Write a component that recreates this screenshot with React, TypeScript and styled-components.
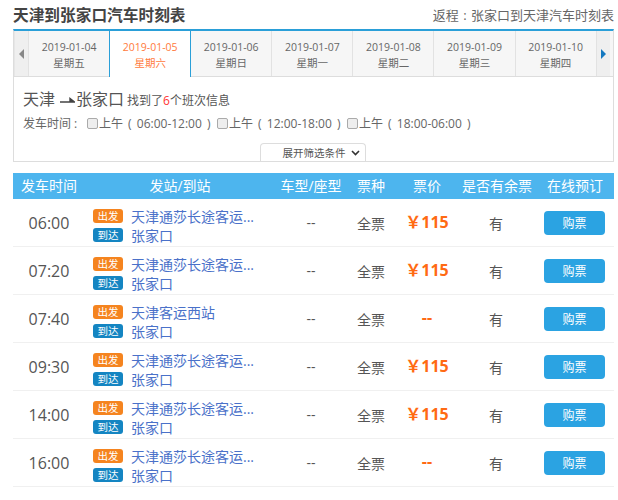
import styled, { createGlobalStyle } from "styled-components";

const GlobalStyle = createGlobalStyle`
  html, body {
    margin: 0;
    padding: 0;
    background: #fff;
    font-family: "Open Sans", "Noto Sans CJK SC", sans-serif;
    color: #555;
  }
`;

const Page = styled.div`
  width: 601px;
  margin-left: 13px;
`;

const TopBar = styled.div`
  height: 29px;
  display: flex;
  align-items: center;
  justify-content: space-between;
`;

const Title = styled.h1`
  margin: 0;
  font-size: 15.7px;
  font-weight: 700;
  color: #444;
`;

const ReturnLink = styled.a`
  font-size: 13px;
  word-spacing: 1px;
  color: #666;
`;

const Panel = styled.div`
  height: 130px;
  border: 1px solid #ddd;
  border-top: 2px solid #2a9fd8;
  position: relative;
`;

const DateBar = styled.div`
  display: flex;
  height: 45px;
  border-bottom: 1px solid #ddd;
  background: #f6f6f6;
`;

const Arrow = styled.div`
  width: 14px;
  display: flex;
  align-items: center;
  justify-content: center;
  background: #efefef;
  border-left: 1px solid #e6e6e6;
  box-sizing: border-box;
`;

const ArrowLeft = styled.span`
  border-style: solid;
  border-width: 5px 5px 5px 0;
  border-color: transparent #888 transparent transparent;
`;

const ArrowRight = styled.span`
  border-style: solid;
  border-width: 5px 0 5px 5px;
  border-color: transparent transparent transparent #1579c0;
`;

const DateTab = styled.div<{ $active?: boolean }>`
  width: 82.1px;
  flex-shrink: 0;
  box-sizing: border-box;
  height: ${(p) => (p.$active ? "46px" : "45px")};
  text-align: center;
  font-size: 10.5px;
  line-height: 16px;
  padding-top: 8px;
  color: ${(p) => (p.$active ? "#ff7a3c" : "#666")};
  background: ${(p) => (p.$active ? "#fff" : "transparent")};
  border-left: 1px solid ${(p) => (p.$active ? "#2a9fd8" : "#e2e2e2")};
  border-right: 1px solid ${(p) => (p.$active ? "#2a9fd8" : "#e2e2e2")};
  margin-right: -1px;
  position: relative;
  z-index: ${(p) => (p.$active ? 1 : 0)};
`;

const Body = styled.div`
  padding: 11px 9px 0;
`;

const RouteLine = styled.div`
  display: flex;
  align-items: baseline;
  color: #555;
  font-size: 16px;
  line-height: 22px;
`;

const RouteArrow = styled.svg`
  width: 15px;
  height: 8px;
  margin: 0 1px 0 5px;
`;

const Found = styled.span`
  font-size: 12px;
  margin-left: 3px;
`;

const Count = styled.span`
  color: #f33;
`;

const FilterLine = styled.div`
  display: flex;
  align-items: center;
  margin-top: 3px;
  font-size: 12px;
  line-height: 18px;
  color: #666;
`;

const FilterLabel = styled.span`
  width: 64px;
  white-space: pre;
`;

const TimeOption = styled.label`
  width: 130px;
  flex-shrink: 0;
  display: flex;
  align-items: center;
  white-space: pre;
  word-spacing: 2px;
`;

const Check = styled.span`
  width: 9px;
  height: 9px;
  margin: 0 1px 2px 0;
  border: 1px solid #aaa;
  border-radius: 2px;
  background: #eee;
`;

const ExpandTab = styled.div`
  position: absolute;
  left: 246px;
  bottom: 0;
  width: 106px;
  height: 18px;
  padding-left: 16px;
  box-sizing: border-box;
  border: 1px solid #ddd;
  border-bottom: none;
  border-radius: 4px 4px 0 0;
  background: #fff;
  display: flex;
  align-items: center;
  justify-content: center;
  gap: 5px;
  font-size: 10.5px;
  color: #555;
`;

const Table = styled.div`
  margin-top: 11px;
`;

const Grid = styled.div`
  display: grid;
  grid-template-columns: 72px 187px 78px 42px 70px 68px 84px;
  align-items: center;
`;

const HeaderRow = styled(Grid)`
  height: 26px;
  background: #4db5ee;
  color: #fff;
  font-size: 14px;
  line-height: 26px;
  text-align: center;
  white-space: nowrap;
`;

const StationHead = styled.div`
  padding-left: 3px;
`;

const BookHead = styled.div`
  padding-left: 6px;
`;

const Row = styled(Grid)`
  height: 47px;
  border-bottom: 1px solid #f0f0f0;
  text-align: center;
  font-size: 14px;
  color: #555;
`;

const Time = styled.div`
  font-size: 16px;
  color: #555;
`;

const Stations = styled.div`
  display: grid;
  grid-template-columns: 30px 1fr;
  column-gap: 8px;
  row-gap: 2px;
  align-items: center;
  padding: 6px 0 0 8px;
  text-align: left;
`;

const Badge = styled.span<{ $kind: "from" | "to" }>`
  height: 14px;
  line-height: 14px;
  border-radius: 3px;
  text-align: center;
  font-size: 10.5px;
  color: #fff;
  background: ${(p) => (p.$kind === "from" ? "#f5841f" : "#1485c2")};
`;

const StationName = styled.span`
  font-size: 14px;
  line-height: 17px;
  color: #4a71c9;
  white-space: nowrap;
`;

const Price = styled.div`
  padding-bottom: 3px;
  font-size: 16px;
  font-weight: 700;
  color: #ff6a13;
`;

const BuyButton = styled.button`
  justify-self: center;
  width: 61px;
  height: 24px;
  margin-left: 5px;
  padding: 0;
  border: none;
  border-radius: 4px;
  background: #2ba3e2;
  color: #fff;
  font-family: inherit;
  font-size: 12px;
`;

const dates = [
  ["2019-01-04", "星期五"],
  ["2019-01-05", "星期六"],
  ["2019-01-06", "星期日"],
  ["2019-01-07", "星期一"],
  ["2019-01-08", "星期二"],
  ["2019-01-09", "星期三"],
  ["2019-01-10", "星期四"],
];

const timeRanges = ["06:00-12:00", "12:00-18:00", "18:00-06:00"];

const LONG_NAME = "天津通莎长途客运...";

const trips = [
  { time: "06:00", from: LONG_NAME, price: "￥115" },
  { time: "07:20", from: LONG_NAME, price: "￥115" },
  { time: "07:40", from: "天津客运西站", price: "--" },
  { time: "09:30", from: LONG_NAME, price: "￥115" },
  { time: "14:00", from: LONG_NAME, price: "￥115" },
  { time: "16:00", from: LONG_NAME, price: "--" },
];

export default function App() {
  return (
    <Page>
      <GlobalStyle />
      <TopBar>
        <Title>天津到张家口汽车时刻表</Title>
        <ReturnLink>返程 : 张家口到天津汽车时刻表</ReturnLink>
      </TopBar>

      <Panel>
        <DateBar>
          <Arrow>
            <ArrowLeft />
          </Arrow>
          {dates.map(([date, week]) => (
            <DateTab key={date} $active={date === "2019-01-05"}>
              {date}
              <br />
              {week}
            </DateTab>
          ))}
          <Arrow>
            <ArrowRight />
          </Arrow>
        </DateBar>
        <Body>
          <RouteLine>
            天津
            <RouteArrow viewBox="0 0 15 8">
              <path d="M0 5h14.5L10 1.5V5" stroke="#444" strokeWidth="1.4" fill="#444" />
            </RouteArrow>
            张家口
            <Found>
              找到了<Count>6</Count>个班次信息
            </Found>
          </RouteLine>
          <FilterLine>
            <FilterLabel>发车时间 :</FilterLabel>
            {timeRanges.map((range) => (
              <TimeOption key={range}>
                <Check />上午 ( {range} )
              </TimeOption>
            ))}
          </FilterLine>
        </Body>
        <ExpandTab>
          展开筛选条件
          <svg width="9" height="6" viewBox="0 0 9 6">
            <path d="M1 1l3.5 3.5L8 1" stroke="#333" strokeWidth="1.6" fill="none" />
          </svg>
        </ExpandTab>
      </Panel>

      <Table>
        <HeaderRow>
          <div>发车时间</div>
          <StationHead>发站/到站</StationHead>
          <div>车型/座型</div>
          <div>票种</div>
          <div>票价</div>
          <div>是否有余票</div>
          <BookHead>在线预订</BookHead>
        </HeaderRow>
        {trips.map((trip) => (
          <Row key={trip.time}>
            <Time>{trip.time}</Time>
            <Stations>
              <Badge $kind="from">出发</Badge>
              <StationName>{trip.from}</StationName>
              <Badge $kind="to">到达</Badge>
              <StationName>张家口</StationName>
            </Stations>
            <div>--</div>
            <div>全票</div>
            <Price>{trip.price}</Price>
            <div>有</div>
            <BuyButton>购票</BuyButton>
          </Row>
        ))}
      </Table>
    </Page>
  );
}
